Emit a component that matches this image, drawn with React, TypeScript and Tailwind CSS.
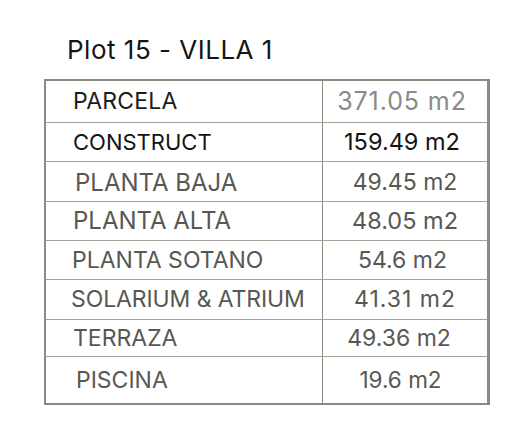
const grey = 'text-[#585853]';

const rows = [
  { label: 'PARCELA', value: '371.05 m2', h: 'h-[41px]', labelCls: 'text-[#1c1c1c] text-[23px] tracking-[0.2px] pl-[27px]', valueCls: 'text-[#8a8a8a] text-[25px] tracking-[0.9px] pr-[6px]' },
  { label: 'CONSTRUCT', value: '159.49 m2', h: 'h-[39px]', labelCls: 'text-[#141414] text-[22px] pl-[27px]', valueCls: 'text-[#141414] text-[23.5px] pr-[6px]' },
  { label: 'PLANTA BAJA', value: '49.45 m2', h: 'h-[40px]', labelCls: `${grey} text-[24px] pl-[29px] pt-[3px]`, valueCls: `${grey} text-[23px] pt-[2px]` },
  { label: 'PLANTA ALTA', value: '48.05 m2', h: 'h-[39px]', labelCls: `${grey} text-[24px] pl-[27px]`, valueCls: `${grey} text-[23.5px]` },
  { label: 'PLANTA SOTANO', value: '54.6 m2', h: 'h-[39px]', labelCls: `${grey} text-[23px] pl-[26px]`, valueCls: `${grey} text-[23px] pr-[5px]` },
  { label: 'SOLARIUM & ATRIUM', value: '41.31 m2', h: 'h-[40px]', labelCls: `${grey} text-[23px] tracking-[-0.1px] pl-[25px]`, valueCls: `${grey} text-[23px] tracking-[1px]` },
  { label: 'TERRAZA', value: '49.36 m2', h: 'h-[37px]', labelCls: `${grey} text-[23px] pl-[27px]`, valueCls: `${grey} text-[23px] pr-[12px]` },
  { label: 'PISCINA', value: '19.6 m2', h: 'h-[47px]', labelCls: `${grey} text-[23px] pl-[30px]`, valueCls: `${grey} text-[22.5px] pr-[9px]` },
];

export default function App() {
  return (
    <div className="w-[525px] h-[432px] bg-white font-['Inter',sans-serif]">
      <div className="pt-[35px] pl-[67px] h-[79px]">
        <h1 className="text-[26px] leading-[30px] tracking-[0.5px] text-[#151515] font-normal">Plot 15 - VILLA 1</h1>
      </div>

      {/* Area table */}
      <div className="ml-[44px] w-[446px] border-2 border-r-[3px] border-[#8c8a80]">
        {rows.map((row, i) => (
          <div
            key={row.label}
            className={`flex ${row.h} ${i > 0 ? 'border-t border-[#a3a198]' : ''}`}
          >
            <div className={`w-[276px] flex items-center ${row.labelCls}`}>
              {row.label}
            </div>
            <div className={`flex-1 flex items-center justify-center border-l border-[#8c8a80] ${row.valueCls}`}>
              {row.value}
            </div>
          </div>
        ))}
      </div>
    </div>
  );
}
